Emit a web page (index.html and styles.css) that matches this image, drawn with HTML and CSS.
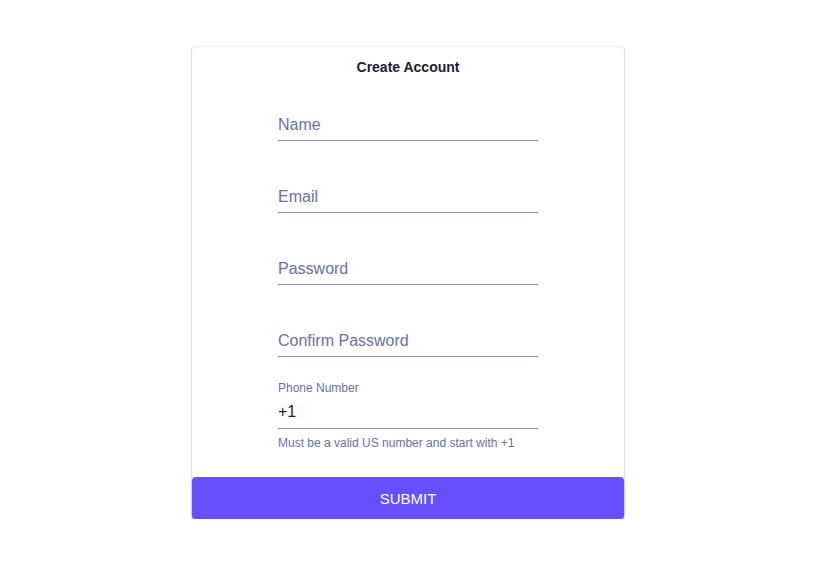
FILE: index.html
```html
<!DOCTYPE html>
<html lang="en">
<head>
  <meta charset="UTF-8">
  <title>Create Account</title>
  <link rel="stylesheet" href="styles.css">
</head>
<body>

<div class="page">
  <div class="signup-card">
    <h2>Create Account</h2>

    <div class="field first">
      <input type="text" id="name" placeholder="Name" />
    </div>
    <div class="field">
      <input type="email" id="email" placeholder="Email" />
    </div>
    <div class="field">
      <input type="password" id="password" placeholder="Password" />
    </div>
    <div class="field">
      <input type="password" id="confirm" placeholder="Confirm Password" />
    </div>
    <div class="field phone">
      <label for="phone">Phone Number</label>
      <input type="text" id="phone" value="+1" />
    </div>
    <p class="helper">Must be a valid US number and start with +1</p>

    <button type="button">SUBMIT</button>
  </div>
</div>

</body>
</html>
```

FILE: styles.css
```css
body {
  margin: 0;
  background-color: #ffffff;
  font-family: 'Liberation Sans', Arial, sans-serif;
}
.page {
  padding: 46px 0 0 191px;
}
.signup-card {
  width: 434px;
  box-sizing: border-box;
  background-color: #ffffff;
  border: 1px solid #dedcff;
  border-top-color: #f2f2ff;
  border-bottom: none;
  border-radius: 5px;
  box-shadow: 0 0 2px rgba(104, 81, 253, 0.1);
  display: flex;
  flex-direction: column;
  align-items: center;
}
h2 {
  margin: 11px 0 0;
  font-size: 14px;
  line-height: 18px;
  font-weight: 700;
  color: #1c1c30;
}
.field {
  width: 260px;
  height: 72px;
  display: flex;
  flex-direction: column;
  justify-content: flex-end;
}
.field.first {
  height: 65px;
}
input {
  width: 100%;
  height: 32px;
  box-sizing: border-box;
  padding: 0;
  border: none;
  border-bottom: 1px solid #8a93c0;
  font-family: inherit;
  font-size: 16px;
  color: #1c1c30;
  background: transparent;
  outline: none;
}
input::placeholder {
  color: #67739f;
  opacity: 1;
}
.phone label {
  font-size: 12px;
  line-height: 14px;
  color: #67739f;
}
.phone input {
  height: 34px;
}
.helper {
  width: 260px;
  margin: 7px 0 0;
  font-size: 12px;
  line-height: 14px;
  color: #67739f;
}
button {
  margin-top: 27px;
  width: 432px;
  height: 42px;
  padding-top: 2px;
  background-color: #6650fd;
  color: #ffffff;
  border: none;
  border-radius: 4px;
  font-family: inherit;
  font-size: 15px;
  cursor: pointer;
  box-shadow: 0 2px 2px rgba(70, 70, 130, 0.4);
}
```
